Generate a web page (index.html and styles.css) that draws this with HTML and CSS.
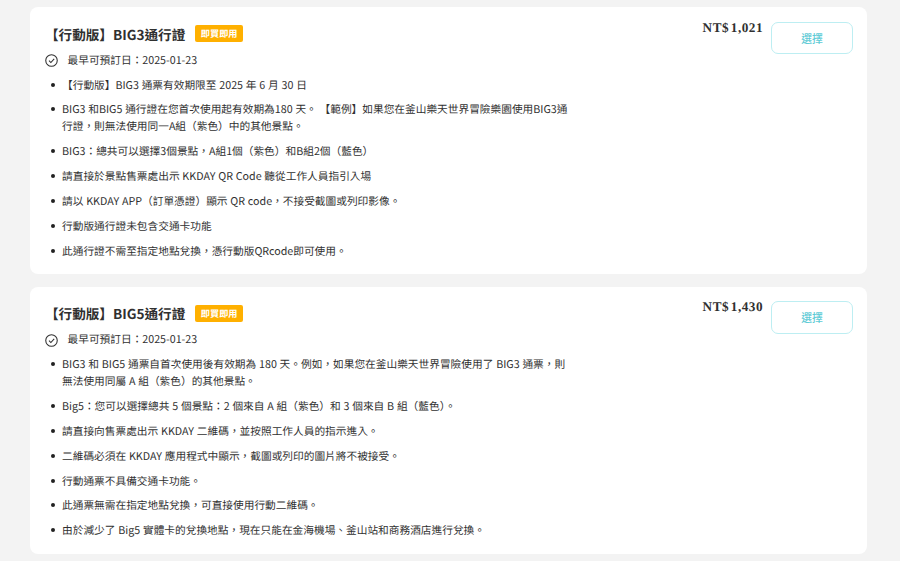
FILE: index.html
```html
<!DOCTYPE html>
<html lang="zh-Hant">
<head>
<meta charset="utf-8">
<title>BIG3 / BIG5</title>
<link rel="stylesheet" href="styles.css">
</head>
<body>
<main class="list">
  <section class="card">
    <div class="info">
      <div class="title-row"><h2 class="title">【行動版】BIG3通行證</h2><span class="badge">即買即用</span></div>
      <div class="date-row">
        <svg class="check" viewBox="0 0 14 14" aria-hidden="true"><circle cx="7" cy="7" r="6.2"/><path d="M4.3 7.2l2 2 3.6-4"/></svg>
        <span>最早可預訂日：2025-01-23</span>
      </div>
      <ul class="notes">
        <li>【行動版】BIG3 通票有效期限至 2025 年 6 月 30 日</li>
        <li>BIG3 和BIG5 通行證在您首次使用起有效期為180 天。 【範例】如果您在釜山樂天世界冒險樂園使用BIG3通行證，則無法使用同一A組（紫色）中的其他景點。</li>
        <li>BIG3：總共可以選擇3個景點，A組1個（紫色）和B組2個（藍色）</li>
        <li>請直接於景點售票處出示 KKDAY QR Code 聽從工作人員指引入場</li>
        <li>請以 KKDAY APP（訂單憑證）顯示 QR code，不接受截圖或列印影像。</li>
        <li>行動版通行證未包含交通卡功能</li>
        <li>此通行證不需至指定地點兌換，憑行動版QRcode即可使用。</li>
      </ul>
    </div>
    <div class="buy">
      <div class="price">NT$ 1,021</div>
      <button class="select" type="button">選擇</button>
    </div>
  </section>
  <section class="card">
    <div class="info">
      <div class="title-row"><h2 class="title">【行動版】BIG5通行證</h2><span class="badge">即買即用</span></div>
      <div class="date-row">
        <svg class="check" viewBox="0 0 14 14" aria-hidden="true"><circle cx="7" cy="7" r="6.2"/><path d="M4.3 7.2l2 2 3.6-4"/></svg>
        <span>最早可預訂日：2025-01-23</span>
      </div>
      <ul class="notes">
        <li>BIG3 和 BIG5 通票自首次使用後有效期為 180 天。例如，如果您在釜山樂天世界冒險使用了 BIG3 通票，則無法使用同屬 A 組（紫色）的其他景點。</li>
        <li>Big5：您可以選擇總共 5 個景點：2 個來自 A 組（紫色）和 3 個來自 B 組（藍色）。</li>
        <li>請直接向售票處出示 KKDAY 二維碼，並按照工作人員的指示進入。</li>
        <li>二維碼必須在 KKDAY 應用程式中顯示，截圖或列印的圖片將不被接受。</li>
        <li>行動通票不具備交通卡功能。</li>
        <li>此通票無需在指定地點兌換，可直接使用行動二維碼。</li>
        <li>由於減少了 Big5 實體卡的兌換地點，現在只能在金海機場、釜山站和商務酒店進行兌換。</li>
      </ul>
    </div>
    <div class="buy">
      <div class="price">NT$ 1,430</div>
      <button class="select" type="button">選擇</button>
    </div>
  </section>
</main>
</body>
</html>
```
FILE: styles.css
```css
* { box-sizing: border-box; }
html, body { margin: 0; height: 561px; overflow: hidden; }
body {
  background: #f3f3f3;
  font-family: "Noto Sans CJK TC", "Noto Sans", sans-serif;
  color: #303030;
  padding: 7.4px 33px 0 30px;
  text-rendering: geometricPrecision;
}
.list { display: flex; flex-direction: column; gap: 12.6px; }
.card {
  display: flex;
  justify-content: space-between;
  background: #fff;
  border-radius: 8px;
  padding: 14.4px 14px 14px 15px;
  height: 267px;
}
.info { width: 525px; }
.title-row { display: flex; align-items: center; gap: 10px; height: 24px; }
.title { margin: 0; font-size: 13.6px; font-weight: 700; line-height: 24px; }
.badge {
  background: #ffb000;
  color: #fff;
  font-size: 9.2px;
  font-weight: 700;
  line-height: 17px;
  padding: 0 5.5px;
  border-radius: 2px;
}
.date-row { display: flex; align-items: center; gap: 9.5px; margin-top: 4.8px; font-size: 10.7px; line-height: 20px; }
.check { width: 13px; height: 13px; fill: none; stroke: #303030; stroke-width: 1.15; }
.notes { list-style: none; margin: 6px 0 0; padding-left: 17px; font-size: 10.7px; word-spacing: 0.4px; line-height: 17px; }
.notes li { margin-bottom: 7.85px; }
.notes li::before {
  content: "";
  display: inline-block;
  width: 4px;
  height: 4px;
  margin-left: -11px;
  margin-right: 7px;
  border-radius: 50%;
  background: #222;
  vertical-align: 2px;
}
.buy { display: flex; align-items: flex-start; gap: 8px; }
.price { font-family: "Liberation Serif", serif; font-weight: 700; font-size: 13.2px; letter-spacing: 0.5px; word-spacing: -2px; line-height: 14px; margin-top: -1px; }
.select {
  width: 82px;
  height: 32.5px;
  background: #fff;
  border: 1.5px solid #bdeef2;
  border-radius: 7px;
  color: #5fcbd6;
  font: inherit;
  font-size: 10.8px;
  font-weight: 500;
  padding: 0 0 1px;
}
```
